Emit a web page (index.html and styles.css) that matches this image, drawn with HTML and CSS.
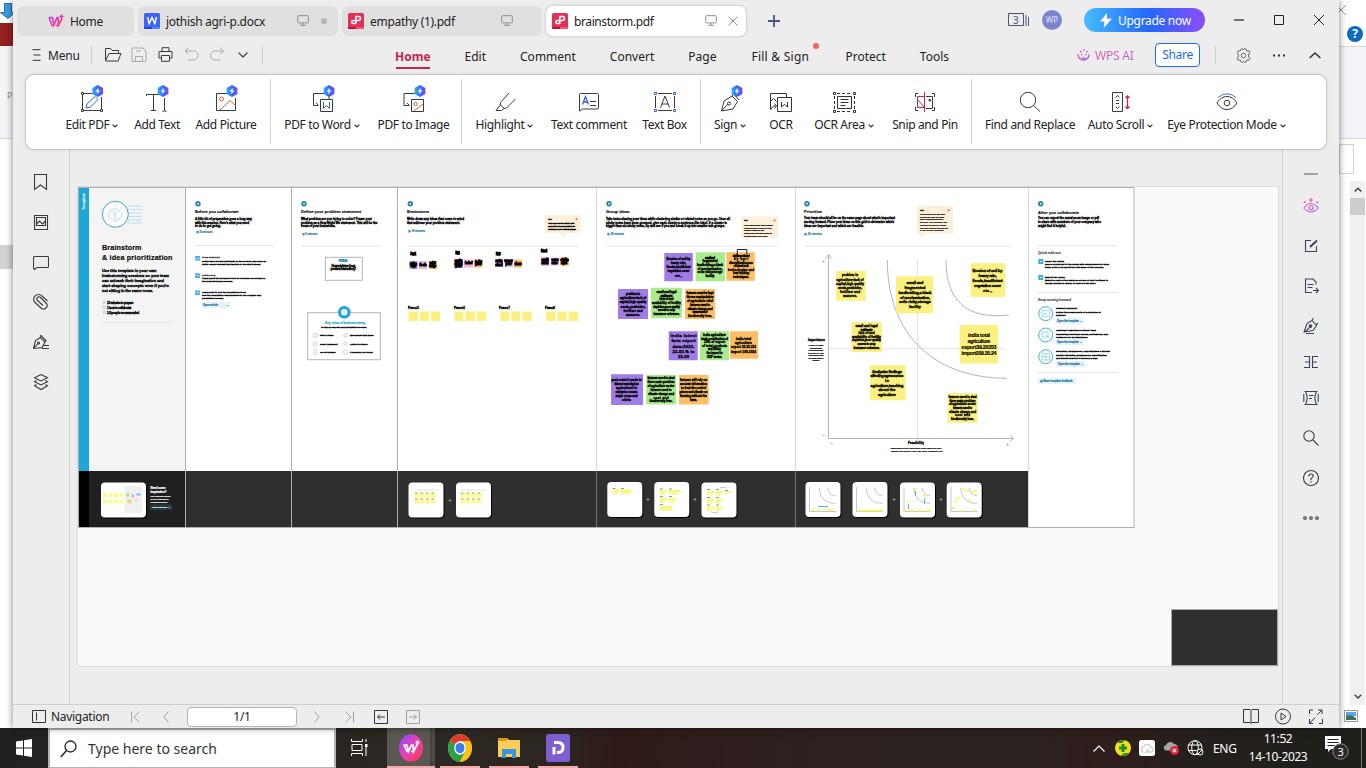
FILE: index.html
```html
<!DOCTYPE html>
<html lang="en">
<head>
<meta charset="utf-8">
<title>brainstorm.pdf - WPS Office</title>
<link rel="stylesheet" href="styles.css">
</head>
<body>
<svg class="defs" width="0" height="0">
  <defs>
    <linearGradient id="gBolt" x1="0" x2="1" y1="0" y2="0"><stop offset="0" stop-color="#35b0fb"/><stop offset=".5" stop-color="#2a6bfb"/><stop offset="1" stop-color="#7a4cf5"/></linearGradient>
    <linearGradient id="gWps" x1="0" x2="1" y1="0" y2="1"><stop offset="0" stop-color="#8a4dff"/><stop offset=".5" stop-color="#e83fb8"/><stop offset="1" stop-color="#ff3b3b"/></linearGradient>
    <linearGradient id="gAi" x1="0" x2="1" y1="0" y2="1"><stop offset="0" stop-color="#f0506a"/><stop offset=".5" stop-color="#d05ad0"/><stop offset="1" stop-color="#7a66f5"/></linearGradient>
    <symbol id="bolt" viewBox="0 0 12 12"><g stroke="none"><path d="M6 0l5.400 3v6L6 12 .6 9V3z" fill="url(#gBolt)"/><path d="M6.800 2.400L3.600 6.600h2L5.200 9.600l3.200-4.200h-2z" fill="#fff"/></g></symbol>
    <symbol id="mon" viewBox="0 0 12 11"><path d="M1.500.7h9a.8.8 0 0 1 .8.8v5.600a.8.8 0 0 1-.8.8h-9a.8.8 0 0 1-.8-.8V1.500a.8.8 0 0 1 .8-.8zM6 8v2M3 10.300h6" fill="none" stroke="#8e8e8e"/></symbol>
    <symbol id="pdf" viewBox="0 0 16 16"><rect width="16" height="16" rx="1.500" fill="#e0315b"/><path d="M0 14h8v2H1.500A1.500 1.500 0 0 1 0 14z" fill="#c4103c"/><path d="M8 14h8a1.500 1.500 0 0 1-1.500 2H8z" fill="#ff5271"/><path d="M7.800 11V3.500h2.700a1.800 1.800 0 0 1 0 3.900H5.300a1.600 1.600 0 0 0 0 3.200h2.500" fill="none" stroke="#fff" stroke-width="1.500"/></symbol>
    <symbol id="chev" viewBox="0 0 6 4"><path d="M.6.6L3 2.900 5.400.6" fill="none" stroke="#333" stroke-width="1.300"/></symbol>
    <symbol id="wps" viewBox="0 0 16 14"><path d="M1 3.500h3.500L6 11l3-7.500h1L10.500 11 14 4.500M1 3.500L4 11.500h2M8 11.500h3M13.500.5v4M11.500 2.500h4" fill="none" stroke="url(#gWps)" stroke-width="1.700"/></symbol>
  </defs>
</svg>
<div class="desktop">
  <aside class="behind-left">
    <svg width="13" height="20" viewBox="0 0 13 20"><path d="M4.500 3.500h7v9H15L8 18.500.5 12.500h4z" fill="#3d9be0" stroke="#2370ae"/></svg>
    <div class="bl-red"></div><div class="bl-tool">P</div><div class="bl-gap"></div><div class="bl-thumb"></div>
  </aside>

  <main class="app">
    <header class="tabs">
      <div class="tab home"><svg width="16" height="14"><use href="#wps"/></svg><span>Home</span></div>
      <div class="tab"><svg width="16" height="16" viewBox="0 0 16 16"><rect width="16" height="16" rx="1.500" fill="#3d63f5"/><path d="M0 14h8v2H1.500A1.500 1.500 0 0 1 0 14z" fill="#2547d8"/><path d="M8 14h8a1.500 1.500 0 0 1-1.500 2H8z" fill="#3f8cff"/><path d="M3.500 4l1.700 6.500L8 4.500l2.800 6L12.500 4" fill="none" stroke="#fff" stroke-width="1.500"/></svg><span class="nm">jothish agri-p.docx</span><svg class="mon" width="12" height="11"><use href="#mon"/></svg><i class="dot"></i></div>
      <div class="tab"><svg width="16" height="16"><use href="#pdf"/></svg><span class="nm">empathy (1).pdf</span><svg class="mon" width="12" height="11"><use href="#mon"/></svg></div>
      <div class="tab on"><svg width="16" height="16"><use href="#pdf"/></svg><span class="nm tight">brainstorm.pdf</span><svg class="mon" width="12" height="11"><use href="#mon"/></svg><svg class="x" width="10" height="10" viewBox="0 0 10 10"><path d="M.7.7l8.600 8.600M9.300.7L.7 9.300" stroke="#8a8a8a" fill="none"/></svg></div>
      <svg class="plus" width="12" height="12" viewBox="0 0 12 12"><path d="M6 0v12M0 6h12" stroke="#46597c" stroke-width="1.800"/></svg>
      <div class="winctl">
        <svg width="22" height="16" viewBox="0 0 22 16"><path d="M.5 1.500h15v12H.5zM18 3v11M20.500 5v9" fill="none" stroke="#46597c"/><text x="5" y="11.500" class="cnt">3</text></svg>
        <span class="avatar">WP</span>
        <span class="upgrade"><svg width="12" height="15" viewBox="0 0 12 15"><path d="M7 0L0 8.500h4.500L3.500 15 12 5.800H7z" fill="#fff"/></svg><b>Upgrade now</b></span>
        <svg class="wc min" width="10" height="12" viewBox="0 0 10 12"><path d="M0 6h10" stroke="#222" stroke-width="1.200"/></svg>
        <svg class="wc" width="10" height="10" viewBox="0 0 10 10"><path d="M.5.5h9v9h-9z" fill="none" stroke="#222"/></svg>
        <svg class="wc" width="10" height="10" viewBox="0 0 10 10"><path d="M0 0l10 10M10 0L0 10" stroke="#222"/></svg>
      </div>
    </header>

    <nav class="menu">
      <svg class="burger" width="9" height="12" viewBox="0 0 9 12"><path d="M.5.7h8M1.500 6h7M.5 11.300h8" stroke="#333" fill="none"/></svg><span class="mtext">Menu</span>
      <i class="vr"></i>
      <svg class="q1" width="130" height="16" viewBox="0 0 130 16" fill="none" stroke="#3a3a3a">
        <path d="M.5 13.500v-12h5l1.500 2h6.500v3M.5 13.500L4 6.500h12L13 14H.5"/>
        <path d="M27 1h11l3 3v10.500H27zM30.500 14.500V9.500h7v5M31 4h5" stroke="#a9a9a9"/>
        <path d="M57 4.500V.7h7v3.800M56.500 11H54V4.500h13V11h-2.500M56.500 8.500h8v5.800h-8z"/>
        <path d="M83.500.8L80 4l3.500 3.200M80 4h8.500a4.500 4.500 0 0 1 0 9H83" stroke="#a9a9a9"/>
        <path d="M115 .8l3.500 3.200-3.500 3.200M118.500 4H110a4.500 4.500 0 0 0 0 9h5.500" stroke="#a9a9a9"/>
      </svg>
      <svg class="q2" width="10" height="6" viewBox="0 0 10 6"><path d="M.5.6L5 5 9.500.6" fill="none" stroke="#333" stroke-width="1.200"/></svg>
      <i class="vr v2"></i>
      <div class="mtabs"><span class="cur">Home</span><span>Edit</span><span>Comment</span><span>Convert</span><span>Page</span><span class="fs">Fill &amp; Sign</span><span>Protect</span><span>Tools</span></div>
      <svg class="ai" width="13" height="13" viewBox="0 0 13 13"><path d="M1 5.500a5.500 5.500 0 1 0 11 0M4.500 8.500q2 1.500 4 0" fill="none" stroke="url(#gAi)" stroke-width="1.400"/><path d="M3 2h1.500v1.500H3zM6 .3h1.400v1.500H6zM9 2h1.500v1.500H9zM4 5h1.300v1.300H4zM8 5h1.300v1.300H8z" fill="url(#gAi)"/></svg>
      <span class="wpsai">WPS AI</span><span class="share">Share</span><i class="vr v3"></i>
      <svg class="gear" width="15" height="15" viewBox="0 0 15 15" fill="none" stroke="#666"><path d="M5 1.200L6.500.6 7.500 2 8.600.6l1.600.6.6 1.800 2.200-.2 1 1.700-1.300 1.500V9l1.300 1.500-1 1.700-2.200-.2-.6 1.800-1.600.6-1.100-1.300-1 1.300L5 13.800 4.300 12l-2.200.2-1-1.700L2.300 9V6L1.100 4.500l1-1.700 2.200.2z"/><circle cx="7.500" cy="7.500" r="2.300"/></svg>
      <svg class="dots" width="12" height="3" viewBox="0 0 12 3"><path d="M0 .6h2v2H0zM5 .6h2v2H5zM10 .6h2v2h-2z" fill="#333"/></svg>
      <svg class="up" width="12" height="7" viewBox="0 0 12 7"><path d="M.6 6L6 1l5.400 5" fill="none" stroke="#333" stroke-width="1.500"/></svg>
    </nav>

    <section class="ribbon">
      <div class="it i1"><svg viewBox="0 0 32 28" fill="none" stroke="#3a3a3a"><path d="M8 8.500h11M6.500 10v14M8 25.500h16M25.500 12v12"/><path d="M5.500 7.500h2v2h-2zM5.500 24.500h2v2h-2zM24.500 24.500h2v2h-2z" fill="#fff"/><path d="M10 23l1-4 8-7.500 3 3L14 22.500z" stroke="#2c5fe0"/><use href="#bolt" x="15.700" y="0" width="12" height="12"/></svg><span>Edit PDF<svg class="cv"><use href="#chev"/></svg></span></div>
      <div class="it i2"><svg viewBox="0 0 32 28" fill="none" stroke="#3a3a3a"><path d="M5.500 11V9.500H19M12.500 9.500v16M10 25.500h5M23.500 13v13M21.500 26.500q2 0 2-1.500 0 1.500 2 1.500"/><use href="#bolt" x="16" y="0" width="12" height="12"/></svg><span>Add Text</span></div>
      <div class="it i3"><svg viewBox="0 0 32 28" fill="none" stroke="#3a3a3a"><path d="M18 8.500H6.500v17H25.500V13"/><circle cx="11.500" cy="14" r="2" stroke="#d9602b"/><path d="M10 25l10-9.500 6 5.500" stroke="#d9602b"/><use href="#bolt" x="16" y="0" width="12" height="12"/></svg><span>Add Picture</span></div>
      <i class="sep"></i>
      <div class="it i4"><svg viewBox="0 0 32 28" fill="none" stroke="#3a3a3a"><path d="M18 8.500H7.500v12H12M10 17.500l2.500 3M14.500 14.500h12v12h-12zM23 11v3"/><path d="M17.500 17v6.500l3-3 3 3V17" stroke="#2c5fe0"/><use href="#bolt" x="17" y="0" width="12" height="12"/></svg><span>PDF to Word<svg class="cv"><use href="#chev"/></svg></span></div>
      <div class="it i5"><svg viewBox="0 0 32 28" fill="none" stroke="#3a3a3a"><path d="M18 8.500H6v12h5M9 18l2.500 2.500M13.500 14.500h12v12h-12z"/><circle cx="17.500" cy="19" r="1.700" stroke="#d9602b"/><path d="M16 26l9-7" stroke="#d9602b"/><use href="#bolt" x="16" y="0" width="12" height="12"/></svg><span>PDF to Image</span></div>
      <i class="sep s2b"></i>
      <div class="it i6"><svg viewBox="0 0 32 28" fill="none" stroke="#3a3a3a"><path d="M20 8l-8.500 9.500-.5 3-4 5h5.500l2.500-2 2.500-.5L26.500 14M11 19.500l4.500 4"/></svg><span>Highlight<svg class="cv"><use href="#chev"/></svg></span></div>
      <div class="it i7"><svg viewBox="0 0 32 28" fill="none" stroke="#3a3a3a"><path d="M6.500 26V9.500a1 1 0 0 1 1-1h17a1 1 0 0 1 1 1V23a1 1 0 0 1-1 1h-15z"/><path d="M9.500 19.500l3-8 3 8M10.500 17h4" stroke="#2c5fe0" stroke-width="1.300"/><path d="M17 16.500h6M17 20.500h6"/></svg><span>Text comment</span></div>
      <div class="it i8"><svg viewBox="0 0 32 28" fill="none" stroke="#3a3a3a"><path d="M9 8.500h14M9 25.500h14M6.500 11v12M25.500 11v12M11.500 22.500L16 11l4.500 11.500M13 19h6"/><path d="M5.500 7.500h2v2h-2zM24.500 7.500h2v2h-2zM5.500 24.500h2v2h-2zM24.500 24.500h2v2h-2z" stroke="#2c5fe0"/></svg><span>Text Box</span></div>
      <i class="sep s3b"></i>
      <div class="it i9"><svg viewBox="0 0 32 28" fill="none" stroke="#3a3a3a"><path d="M7.500 26l2.500-10 8-5 5.500 5.500-4.500 7.500zM7.500 26l6.500-7M20.500 10l4.500 5M18 11l2-2.500"/><circle cx="15" cy="18.500" r="1.500"/><use href="#bolt" x="17" y="0" width="12" height="12"/></svg><span>Sign<svg class="cv"><use href="#chev"/></svg></span></div>
      <div class="it i10"><svg viewBox="0 0 32 28" fill="none" stroke="#30343e"><path d="M21.500 12.500v-4H5.500v16M5.500 16.500l3-3 3 3M6 24.500q1-4 5-3.500M9.500 18.500l2 2.500-2 2.500M12.500 12.500h14v14h-14zM16.500 17v5l3-2.500 3 2.500v-5"/></svg><span>OCR</span></div>
      <div class="it i11"><svg viewBox="0 0 32 28" fill="none" stroke="#30343e"><path d="M9 8.500h14M9 26.500h14M6.500 11v13M26.500 11v13" stroke-dasharray="3 2"/><path d="M5.500 7.500h2v2h-2zM25.500 7.500h2v2h-2zM5.500 25.500h2v2h-2zM25.500 25.500h2v2h-2zM9.500 11.500h14v12h-14zM12.500 14.500h8M12.500 17.500h8M12.500 20.500h5"/></svg><span>OCR Area<svg class="cv"><use href="#chev"/></svg></span></div>
      <div class="it i12"><svg viewBox="0 0 32 28" fill="none" stroke="#3a3a3a"><path d="M9 8.500H6.500V12M23 8.500h2.500V12M9 25.500H6.500V22M23 25.500h2.500V22M17 11.500h6.500v12H17M20 14.500h1.500v1.500H20z"/><path d="M15.500 7v20M15 11.500H8.500v11H15M9 15l6 7" stroke="#c8254e"/></svg><span>Snip and Pin</span></div>
      <i class="sep s4b"></i>
      <div class="it i13"><svg viewBox="0 0 32 28" fill="none" stroke="#3a3a3a"><circle cx="14" cy="15" r="7.700"/><path d="M19.500 20.500l6.500 6"/></svg><span>Find and Replace</span></div>
      <div class="it i14"><svg viewBox="0 0 32 28" fill="none" stroke="#3a3a3a"><path d="M7.500 7.500h10v19h-10zM10.500 12.500l2-2 2 2M10.500 21.500l2 2 2-2M11 15.500h3M11 18.500h3"/><path d="M22.500 11v12M20.500 13l2-2 2 2M20.500 21.500l2 2 2-2" stroke="#c8254e" stroke-width="1.300"/></svg><span>Auto Scroll<svg class="cv"><use href="#chev"/></svg></span></div>
      <div class="it i15"><svg viewBox="0 0 32 28" fill="none" stroke="#3a3a3a"><path d="M6 18q4-6.500 10-6.500T26 18q-4 6.500-10 6.500T6 18z"/><circle cx="16" cy="18" r="2.800"/><path d="M7 12.500q9-7.500 18 0" stroke="#3d6df0"/></svg><span>Eye Protection Mode<svg class="cv"><use href="#chev"/></svg></span></div>
    </section>

    <section class="work">
      <aside class="rail left">
        <svg viewBox="0 0 16 18"><path d="M1.500 1.500h12v15l-6-4.500-6 4.500z"/></svg>
        <svg viewBox="0 0 16 18"><path d="M1.500 2.500h13v14h-13zM3.500 4.500h9v8h-9zM3.500 11l3-3 3 3 3-3"/></svg>
        <svg viewBox="0 0 16 18"><path d="M1.500 3.500h13a1 1 0 0 1 1 1v9a1 1 0 0 1-1 1H4l-2.500 2-1-1v-11a1 1 0 0 1 1-1z"/></svg>
        <svg viewBox="0 0 16 18"><path d="M14.500 8L9 3a4.800 4.800 0 0 0-7 0 4.500 4.500 0 0 0 0 6.500l6 5.500a3.500 3.500 0 0 0 5-5L7.500 4.500a2 2 0 0 0-3 3l5.500 5"/></svg>
        <svg viewBox="0 0 16 18"><path d="M.5 15.500l2-8 5-3 4.500 4.500-3 5.500-8.500 1 4.500-5M7 3.500l1-1 5 5-1 1M10 12.500h6M9 15.500h7"/><circle cx="5.500" cy="10" r="1"/></svg>
        <svg viewBox="0 0 16 18"><path d="M8 1.500l6.500 3.300L8 8 1.500 4.800zM3.500 7.500l-2 1.300L8 12l6.500-3.200-2-1.300M3.500 11.500l-2 1.300L8 16.500l6.500-3.700-2-1.300"/></svg>
      </aside>

      <div class="canvas">
        <div class="page">
          <div class="board">
            <svg width="107" height="341" viewBox="78 187 107 341" class="panel">
              <rect x="78" y="187" width="107" height="284" fill="#f4f4f4"/><rect x="78" y="471" width="107" height="57" fill="#202020"/>
              <rect x="78" y="187" width="11" height="284" fill="#1ba7d8"/><rect x="78" y="471" width="11" height="57" fill="#000"/>
              <text class="w tpl" transform="translate(85 210) rotate(-90)" textLength="17">Template</text>
              <path class="wave" d="M128 206h14M128 209.500h14M128 213h14M128 216.500h14M128 220h14M128 223h14"/>
              <circle cx="115.300" cy="214.300" r="13" fill="#fff" stroke="#35a8d4" stroke-width="1"/>
              <path class="ic" d="M112 219c-5-1-4-7-1-8 1-3 7-3 8 0 4 1 4 7-1 8l-2.500 3zM113 211l2 5 2-5M115 216v4M115.500 207v-2M111 209l-1.500-1.500M120 209l1.500-1.500"/>
              <text class="ttl" x="102" y="249.800" textLength="39.500">Brainstorm</text><text class="ttl" x="102" y="260" textLength="70.500">&amp; idea prioritization</text>
              <g class="b4"><text x="102" y="271.800" textLength="54.500">Use this template in your own</text><text x="102" y="276.900" textLength="67">brainstorming sessions so your team</text><text x="102" y="281.900" textLength="62">can unleash their imagination and</text><text x="102" y="287" textLength="67">start shaping concepts even if you're</text><text x="102" y="292" textLength="51">not sitting in the same room.</text></g>
              <g class="b3"><text x="107" y="304" textLength="26.500">10 minutes to prepare</text><text x="107" y="309" textLength="24.500">1 hour to collaborate</text><text x="107" y="314" textLength="32">2-8 people recommended</text></g>
              <path class="ic2" d="M103 301.500h2v2h-2zM103 306.500h2v2h-2zM103 311.500h2v2h-2z"/><path class="hr" d="M103 322.500h68"/>
              <rect class="card" x="101" y="482.500" width="45" height="35" rx="4"/><rect x="124.500" y="486" width="17.500" height="27" fill="#f0f0f0"/>
              <path class="yl" d="M103 493h4v4h-4zM108.500 493h4v4h-4zM114 493h4v4h-4zM119.500 493h4v4h-4zM103 499.500h4v4h-4zM108.500 499.500h4v4h-4zM114 499.500h4v4h-4zM119.500 499.500h4v4h-4z"/>
              <path d="M126 493.500h3v3h-3z" fill="#a4e38b"/><path d="M131.500 494.500h2.500v3h-2.500z" fill="#e3a4e0"/><path d="M136.500 493.500h4v2h-4z" fill="#6dc9e8"/><path d="M127.500 499.500h4v4h-4z" fill="#eed07e"/><path d="M135 499.500h3v2h-3z" fill="#ddd"/>
              <g class="w3"><text x="150.500" y="489" textLength="15">Need some</text><text x="150.500" y="493" textLength="16">inspiration?</text></g>
              <g class="w2"><text x="150.500" y="497" textLength="20">See a finished version</text><text x="150.500" y="500" textLength="18">of this template to</text><text x="150.500" y="503" textLength="17">kickstart your work.</text></g>
              <rect x="150" y="504.500" width="22" height="5.500" rx="1" fill="#263a44"/><text class="w2" x="152" y="508.300" textLength="18">Open example →</text>
              <path class="ln" d="M78.500 187v341M78 187.500h107M78 527.500h107"/>
            </svg>
            <svg class="panel" width="106" height="341" viewBox="185 187 106 341">
              <rect class="foot" x="185" y="471" width="106" height="57"/>
              <circle class="num" cx="198" cy="203.700" r="2.700"/><circle cx="198" cy="203.700" r=".9" fill="#fff"/>
              <text class="h" x="195" y="213" textLength="43.500">Before you collaborate</text>
              <g class="b3"><text x="195" y="220.300" textLength="57">A little bit of preparation goes a long way</text><text x="195" y="223.800" textLength="54">with this session. Here's what you need</text><text x="195" y="227.300" textLength="26">to do to get going.</text></g>
              <text class="tm" x="195.500" y="233" textLength="17">◷ 10 minutes</text><path class="hr" d="M195 245.500h79"/>
              <path class="bx" d="M195.200 256h4.600v4.600h-4.600zM195.200 273.300h4.600v4.600h-4.600zM195.200 290.400h4.600v4.600h-4.600z"/><path class="bw" d="M196.500 258.500h2M196.500 275.500h2M196.500 292.800h2"/>
              <g class="b25"><text class="lt" x="202" y="258.300" textLength="18">Team gathering</text><text x="202" y="262" textLength="64">Define who should participate in the session and send an</text><text x="202" y="265" textLength="59">invite. Share relevant information or pre-work ahead.</text>
              <text class="lt" x="202" y="275.600" textLength="13.500">Set the goal</text><text x="202" y="279.300" textLength="63">Think about the problem you'll be focusing on solving in</text><text x="202" y="282.300" textLength="31">the brainstorming session.</text>
              <text x="202" y="293" textLength="44">Learn how to use the facilitation tools</text><text x="202" y="296.200" textLength="59">Use the Facilitation Superpowers to run a happy and</text><text x="202" y="299.200" textLength="22">productive session.</text></g>
              <rect x="202" y="302" width="28" height="6" fill="#e3f3fb"/><text class="bt" x="203" y="306.200" textLength="15">Open article</text><text class="bt" x="226" y="306.200">→</text>
              <path class="ln" d="M185.500 187v341"/><path class="ln" d="M185 187.500h106M185 527.500h106"/>
            </svg>
            <svg class="panel" width="106" height="341" viewBox="291 187 106 341">
              <rect class="foot" x="291" y="471" width="106" height="57"/>
              <circle class="num" cx="304" cy="203.700" r="2.700"/><circle cx="304" cy="203.700" r=".9" fill="#fff"/>
              <text class="h" x="301" y="213" textLength="60">Define your problem statement</text>
              <g class="b3"><text x="301" y="220.300" textLength="71">What problem are you trying to solve? Frame your</text><text x="301" y="223.500" textLength="76.500">problem as a How Might We statement. This will be the</text><text x="301" y="227.300" textLength="34.500">focus of your brainstorm.</text></g>
              <text class="tm" x="301.500" y="235" textLength="16">◷ 5 minutes</text><path class="hr" d="M301 246.300h79"/>
              <rect class="gb" x="325.300" y="257.300" width="37" height="23"/><text class="tm" x="338.500" y="262" textLength="9">PROBLEM</text><g class="b3"><text x="331.500" y="267.300" textLength="24">How might we [your</text><text x="330.500" y="270.300" textLength="25.500">problem statement]?</text></g>
              <rect class="gb" x="307.700" y="312.700" width="72.600" height="47"/><circle cx="344.300" cy="312.300" r="6.300" fill="#1ba7d8"/><circle cx="344.300" cy="312.300" r="3.200" fill="#fff"/><path class="ic" d="M342.500 310.500l3.500 3.500M346 310.500l-3.500 3.500"/>
              <text class="tm big" x="325" y="324.200" textLength="40">Key rules of brainstorming</text>
              <g class="b25"><text x="321" y="328" textLength="45.500">To run an smooth and productive session</text><text x="320" y="336" textLength="14">Stay in topic.</text><text x="350" y="336" textLength="24">Encourage wild ideas.</text><text x="320" y="345" textLength="18">Defer judgment.</text><text x="350" y="345" textLength="18">Listen to others.</text><text x="320" y="353" textLength="16">Go for volume.</text><text x="350" y="353" textLength="23">If possible, be visual.</text></g>
              <g class="ic"><circle cx="315.300" cy="335.300" r="2"/><circle cx="345.500" cy="335.300" r="1.700"/><circle cx="315.300" cy="344" r="2"/><circle cx="345.500" cy="343.500" r="1.700"/><rect x="314" y="349.500" width="2.500" height="5" rx="1"/><ellipse cx="345.500" cy="352" rx="2.300" ry="1.700"/></g>
              <path class="ln" d="M291.500 187v341M291 187.500h106M291 527.500h106"/>
            </svg>
            <svg class="panel" width="199" height="341" viewBox="397 187 199 341">
              <rect class="foot" x="397" y="471" width="199" height="57"/>
              <circle class="num" cx="410.300" cy="203.700" r="2.700"/><circle cx="410.300" cy="203.700" r=".9" fill="#fff"/>
              <text class="h" x="407" y="213" textLength="22">Brainstorm</text>
              <g class="b3"><text x="407" y="220.300" textLength="57">Write down any ideas that come to mind</text><text x="407" y="223.600" textLength="53">that address your problem statement.</text></g>
              <text class="tm" x="408" y="232.300" textLength="17">◷ 10 minutes</text><path class="hr" d="M408 246h171"/>
              <path class="tip" d="M544.700 215h36v18h-14l-4 5-2-5h-16z"/><text class="b25" x="548" y="220">TIP</text><circle cx="576.500" cy="219" r="1.100" fill="#f26a4c"/><g class="b25"><text x="548" y="223.800" textLength="26.500">You can select a sticky note</text><text x="548" y="226.800" textLength="27">and hit the pencil [switch to</text><text x="548" y="229.800" textLength="28">sketch] icon to start drawing!</text></g>
              <path d="M409.500 261h8v8h-8zM454 259h9v9h-9zM495 259h8v8h-8zM541 257.500h8v8h-8z" fill="#a98bea"/><path d="M419 261h8v8h-8zM464 259.500h9v8h-9zM505 259h8v8h-8zM551 257.500h8v8h-8z" fill="#f4b3d8"/><path d="M429 261h8v8h-8zM474.500 259.500h8v8h-8zM514 259.500h8v8h-8zM560 257.500h9v8h-9z" fill="#ffb961"/>
              <g class="blk"><text x="410.500" y="254.800" textLength="5.500">Person 1</text><text x="455.500" y="253.800" textLength="4">Person 2</text><text x="496" y="254.800" textLength="4.500">Person 3</text><text x="541" y="252" textLength="6">Person 4</text>
              <text x="410" y="264.500" textLength="7">problem</text><text x="411" y="267" textLength="5">crops</text><text x="419.500" y="266" textLength="7">floods</text><text x="429.500" y="264" textLength="6">market</text><text x="429" y="267" textLength="7">storage</text><text x="455" y="262" textLength="7">quality</text><text x="454.500" y="264.500" textLength="8">seeds and</text><text x="455.500" y="267" textLength="6">pests</text><text x="465" y="264" textLength="7.500">lack of</text><text x="475" y="262.500" textLength="7">facility</text><text x="475" y="265" textLength="6.500">prices</text><text x="495.500" y="262" textLength="7">erosion</text><text x="495.500" y="265.500" textLength="7">of soil</text><text x="504.500" y="262" textLength="8">transport</text><text x="505.500" y="265" textLength="6">poor</text><text x="514.500" y="264.500" textLength="7">climate</text><text x="541.500" y="260.500" textLength="7">credit</text><text x="541.500" y="263.500" textLength="7">debts</text><text x="551.500" y="260.500" textLength="7">water</text><text x="551.500" y="263.500" textLength="6">scarce</text><text x="560.500" y="260.500" textLength="8">subsidies</text><text x="561" y="263.500" textLength="6">export</text></g>
              <g class="b3"><text x="408" y="309" textLength="11">Person 5</text><text x="454" y="309" textLength="11">Person 6</text><text x="499" y="309" textLength="11">Person 7</text><text x="545" y="309" textLength="10">Person 8</text></g>
              <path class="y2" d="M408.500 311.500h9.500v9.500h-9.500zM420 311.500h9v9.500h-9zM431 311.500h9v9.500h-9zM454.500 311.500h9v9.500h-9zM465.500 311.500h9.500v9.500h-9.500zM477 311.500h9v9.500h-9zM500.300 311.500h9v9.500h-9zM511.300 311.500h9v9.500h-9zM522.500 311.500h9v9.500h-9zM546 311.500h9.500v9.500H546zM557.500 311.500h9v9.500h-9zM568.500 311.500h9.500v9.500h-9.500z"/>
              <rect class="card" x="408.500" y="482.500" width="35" height="35" rx="4"/><rect class="card" x="456" y="482.500" width="35" height="35" rx="4"/><path class="hr" d="M414 490h25M461 490h25"/>
              <path class="yl" d="M414.500 493h4.500v4.500h-4.500zM420 493h4.500v4.500H420zM425.500 493h4.500v4.500h-4.500zM431 493h4.500v4.500H431zM414.500 499h4.500v4.500h-4.500zM420 499h4.500v4.500H420zM425.500 499h4.500v4.500h-4.500zM431 499h4.500v4.500H431zM460.500 493h4.500v4.500h-4.500zM466 493h4.500v4.500H466zM471.500 493h4.500v4.500h-4.500zM477 493h4.500v4.500H477zM460.500 499h4.500v4.500h-4.500zM466 499h4.500v4.500H466zM471.500 499h4.500v4.500h-4.500zM477 499h4.500v4.500H477z"/><path d="M415 493h21M415 499h21M461 493h21M461 499h21" stroke="#8a8a55" stroke-width=".8" stroke-dasharray="2.500 3"/>
              <path class="ar" d="M448.500 500.500h3M450 499v3"/>
              <path class="ln" d="M397.500 187v341M397 187.500h199M397 527.500h199"/>
            </svg>
            <svg class="panel" width="199" height="341" viewBox="596 187 199 341">
              <rect class="foot" x="596" y="471" width="199" height="57"/>
              <circle class="num" cx="609" cy="203.700" r="2.700"/><circle cx="609" cy="203.700" r=".9" fill="#fff"/>
              <text class="h" x="606" y="213" textLength="23.500">Group ideas</text>
              <g class="b3"><text x="606" y="220" textLength="124">Take turns sharing your ideas while clustering similar or related notes as you go. Once all</text><text x="606" y="223.500" textLength="121">sticky notes have been grouped, give each cluster a sentence-like label. If a cluster is</text><text x="606" y="227.200" textLength="119">bigger than six sticky notes, try and see if you and break it up into smaller sub-groups.</text></g>
              <text class="tm" x="607" y="235" textLength="17">◷ 20 minutes</text><path class="hr" d="M607 246h170"/>
              <path class="tip" d="M741.500 216.500h36.500V238h-29v5l-5-5h-2.500z"/><text class="b25" x="744" y="221">TIP</text><circle cx="774.500" cy="220.500" r="1.100" fill="#f26a4c"/><g class="b2"><text x="744" y="226" textLength="29">Add customizable tags to sticky</text><text x="744" y="229" textLength="28">notes to make it easier to find,</text><text x="744" y="231" textLength="20">browse, organize, and</text><text x="744" y="233.500" textLength="28">categorize important ideas as</text><text x="744" y="236.500" textLength="24">themes within your mural.</text></g>
              <path fill="#a07ce6" d="M664.300 253h28.500v28.300h-28.500zM618 289h30v30h-30zM668.700 331.300h29v29h-29zM611 374.300h32V405h-32z"/>
              <path fill="#a9ec8e" d="M695.700 252.300H725v29h-29.300zM651 287.700h31v30.500h-31zM700 331.300h29v29h-29zM646.300 375H676v29.500h-29.700z"/>
              <path fill="#ffbe64" d="M726.300 252.300h28.500v28.500h-28.500zM685 289h30v30h-30zM730 331.300h28v27.500h-28zM679 375h29.700v29.500H679z"/>
              <g class="b3 m"><text x="678.500" y="260" textLength="24">Erosion of soil by</text><text x="678.500" y="264.200" textLength="15">heavy rain,</text><text x="678.500" y="268.300" textLength="24">floods,insufficient</text><text x="678.500" y="272.200" textLength="22">vegetation cover</text><text x="678.500" y="276.500" textLength="7">etc.,</text>
              <text x="710" y="259" textLength="10">small and</text><text x="710" y="262.300" textLength="15">fragmented</text><text x="710" y="265.800" textLength="26">landholding,a black</text><text x="710" y="269.500" textLength="25">of mechanisation,</text><text x="710" y="273" textLength="25">soils risky,storage</text><text x="710" y="277" textLength="9">facility</text>
              <text x="741" y="257" textLength="17">challenges faced</text><text x="741" y="260" textLength="14">by agri</text><text x="741" y="263.500" textLength="24">diversification,use</text><text x="741" y="267" textLength="15">of latest tech</text><text x="741" y="270.500" textLength="26">technologies and</text><text x="741" y="274" textLength="16">low funding</text><text x="741" y="278" textLength="16">techniques.</text>
              <text x="633" y="295" textLength="14">problem in</text><text x="633" y="299" textLength="26">agriculture:lack of</text><text x="633" y="303.200" textLength="27">capital,high quality</text><text x="633" y="307.500" textLength="25">seeds,pesticides,</text><text x="633" y="311.500" textLength="19">fertilizer and</text><text x="633" y="316" textLength="14">manures.</text>
              <text x="666.500" y="293" textLength="20">small and legal</text><text x="666.500" y="296.500" textLength="12">problems in</text><text x="666.500" y="300" textLength="14">lack of and</text><text x="666.500" y="304" textLength="29">availability of fertility</text><text x="666.500" y="307.500" textLength="27">depletion,poor quality</text><text x="666.500" y="311" textLength="17">access to crop</text><text x="666.500" y="315" textLength="26">insurance schemes.</text>
              <text x="700" y="294" textLength="27">farmers must be kept</text><text x="700" y="298" textLength="27">throne manipulation</text><text x="700" y="301.500" textLength="26">of agriculture relief</text><text x="700" y="305.500" textLength="20">farmers want to</text><text x="700" y="309.500" textLength="25">climate change and</text><text x="700" y="313" textLength="15">awareness of</text><text x="700" y="317" textLength="24">biodiversity loss.</text></g>
              <g class="b4 m"><text x="683.500" y="336.500" textLength="26">india latest</text><text x="683.500" y="342.300" textLength="24">farm export</text><text x="683.500" y="347.500" textLength="22">data:2022-</text><text x="683.500" y="353" textLength="22">23-$0.% to</text><text x="683.500" y="358.300" textLength="11">35.69</text></g>
              <g class="b3 m"><text x="714.500" y="336" textLength="23">india agriculture</text><text x="714.500" y="339.500" textLength="27">trade,contribution of</text><text x="714.500" y="343" textLength="21">10% of export</text><text x="714.500" y="346.500" textLength="25">of total products</text><text x="714.500" y="350" textLength="13">and 11% by</text><text x="714.500" y="353.500" textLength="16">the import in</text><text x="714.500" y="358" textLength="15">GDP sector.</text>
              <text x="743.500" y="340" textLength="15">india total</text><text x="743.500" y="344" textLength="17">agriculture</text><text x="743.500" y="348" textLength="25">export 39.20.353</text><text x="743.500" y="353" textLength="25">import 109.2024</text>
              <text x="626.500" y="381" textLength="30">pest control needs in</text><text x="626.500" y="385" textLength="24">labour scarcity,low</text><text x="626.500" y="389" textLength="21">agricultural in</text><text x="626.500" y="393" textLength="22">analysis census</text><text x="626.500" y="397" textLength="22">major crops and</text><text x="626.500" y="401" textLength="9">cities</text>
              <text x="661" y="379" textLength="27">farmers need to deal</text><text x="661" y="382.700" textLength="27">three main problem</text><text x="661" y="387" textLength="27">of agriculture sector</text><text x="661" y="391" textLength="21">farmers need to</text><text x="661" y="394.500" textLength="26">climate change and</text><text x="661" y="398.500" textLength="15">cost and</text><text x="661" y="402" textLength="23">biodiversity loss.</text>
              <text x="693.500" y="381" textLength="27">farmers will rely on</text><text x="693.500" y="385" textLength="27">accurate information</text><text x="693.500" y="389" textLength="25">to treat the control</text><text x="693.500" y="393" textLength="28">prices and climate on</text><text x="693.500" y="397" textLength="27">farming without the</text><text x="693.500" y="401" textLength="7">farm.</text></g>
              <path d="M737.300 249.500h9.500v6.500h-9.500z" fill="none" stroke="#222" stroke-width="1"/>
              <rect class="card" x="607.300" y="482" width="35" height="35" rx="4"/><rect class="card" x="654.300" y="482" width="35" height="35" rx="4"/><rect class="card" x="701.500" y="482.500" width="35" height="35" rx="4"/>
              <path class="yd" d="M612.500 490.500h7M621 490.500h11M612.500 492.700h5M621 492.700h9M660 491h7M669 491h11.500M660 493.500h5M669 493.500h9M660 499h7M669 499h7M660 501.500h5M669 501.500h5M660 507h12M660 509.500h12M707 492h7M716 492h7M725 492h6M707 494.500h5M716 494.500h5M707 500h7M716 500h6M707 502.500h5M716 502.500h5M707 507.500h7M716 507.500h6M707 510h5M716 510h5"/>
              <path class="kd" d="M612.500 488.500h3M621 488.500h3M660 489h3M669 489h3M660 496.500h3M669 496.500h3M660 504.500h3M707 489.500h3M716 489.500h3M725 490.500h3M707 497.500h3M716 497.500h3M707 505h3M716 505h3"/><path d="M720 488q3-2 7 0M711 512q4 2 7 0" fill="none" stroke="#a99af0" stroke-width=".7"/>
              <path class="ar" d="M646.500 499.500h3M648 498v3M693.500 499.500h3M695 498v3"/>
              <path class="ln" d="M596 187v341M596 187.500h199M596 527.500h199"/>
            </svg>
            <svg class="panel" width="233" height="341" viewBox="795 187 233 341">
              <rect class="foot" x="795" y="471" width="233" height="57"/>
              <circle class="num" cx="807" cy="203.700" r="2.700"/><circle cx="807" cy="203.700" r=".9" fill="#fff"/>
              <text class="h" x="804" y="213" textLength="18">Prioritize</text>
              <g class="b3"><text x="804" y="219.200" textLength="91">Your team should all be on the same page about what's important</text><text x="804" y="223.200" textLength="90">moving forward. Place your ideas on this grid to determine which</text><text x="804" y="227.200" textLength="60">ideas are important and which are feasible.</text></g>
              <text class="tm" x="804" y="235" textLength="18">◷ 20 minutes</text><path class="hr" d="M805 246.300h205"/>
              <path class="tip" d="M917 206h36v27.500h-27l-6 5v-5h-3z"/><text class="b25" x="920" y="211">TIP</text><circle cx="948.500" cy="210.300" r="1.100" fill="#f26a4c"/><g class="b2"><text x="920" y="215" textLength="25">Participants can use their</text><text x="920" y="217.700" textLength="24">cursors to point at where</text><text x="920" y="220.400" textLength="23">sticky notes should go on</text><text x="920" y="223.100" textLength="27">the grid. The facilitator can</text><text x="920" y="225.800" textLength="26">confirm the spot by using</text><text x="920" y="228.500" textLength="28">the laser pointer holding the</text><text x="920" y="231.200" textLength="24">H key on the keyboard.</text></g>
              <path d="M828.500 348.700H1006M917.500 260v178" stroke="#e3e3e3" fill="none"/>
              <g fill="none" stroke="#b5b5b5"><path d="M828.500 438.500V255M825.500 258.500l3-4 3 4M828.500 438.500H1013M1010 435.500l3.500 3-3.500 3"/><path d="M887.300 260c0 70 42 118 119.500 118.300M946 260c0 40 20 60 63 55"/></g>
              <g class="pm"><text x="822" y="263">+</text><text x="822" y="437">–</text><text x="830" y="445">–</text><text x="1006" y="446">+</text></g>
              <path class="y2" d="M836 271h29.700v29.700H836zM896 276.300h37v37h-37zM970.700 263.300h34.300V297h-34.300zM851.500 322h30.300v30h-30.300zM959.700 325h38.300v38.500h-38.300zM870 365.300h35.500v35H870zM947.700 393.300h30v29.500h-30z"/>
              <g class="b3 m"><text x="850" y="276" textLength="16">problem in</text><text x="850" y="281" textLength="27">agriculture:lack of</text><text x="850" y="285" textLength="28">capital,high quality</text><text x="850" y="289" textLength="24">seeds,pesticides,</text><text x="850" y="293" textLength="20">fertilizer and</text><text x="850" y="297.200" textLength="14">manures.</text>
              <text x="866.500" y="327" textLength="22">small and legal</text><text x="866.500" y="331" textLength="12">problems in</text><text x="866.500" y="334.200" textLength="16">lack of and</text><text x="866.500" y="338" textLength="29">availability of fertility</text><text x="866.500" y="341.200" textLength="29">depletion,poor quality</text><text x="866.500" y="345" textLength="18">access to crop</text><text x="866.500" y="349" textLength="26">insurance schemes.</text>
              <text x="962.500" y="398" textLength="28">farmers need to deal</text><text x="962.500" y="401.500" textLength="26">three main problem</text><text x="962.500" y="405" textLength="27">of agriculture sector</text><text x="962.500" y="409" textLength="19">farmers need to</text><text x="962.500" y="412.500" textLength="27">climate change and</text><text x="962.500" y="416" textLength="15">cost and</text><text x="962.500" y="420" textLength="23">biodiversity loss.</text></g>
              <g class="b4 m"><text x="915" y="284" textLength="17">small and</text><text x="915" y="289" textLength="21">fragmented</text><text x="915" y="294" textLength="33">landholding,a black</text><text x="915" y="298.500" textLength="30">of mechanisation,</text><text x="915" y="303" textLength="32">soils risky,storage</text><text x="915" y="308" textLength="12">facility</text>
              <text x="987.500" y="272.300" textLength="30">Erosion of soil by</text><text x="987.500" y="277.300" textLength="18">heavy rain,</text><text x="987.500" y="282" textLength="30">floods,insufficient</text><text x="987.500" y="286.500" textLength="27">vegetation cover</text><text x="987.500" y="291.500" textLength="9">etc.,</text>
              <text x="887" y="373" textLength="30">Analysize findings</text><text x="887" y="377.300" textLength="33">affecting agresources</text><text x="887" y="382" textLength="4">in</text><text x="887" y="386.500" textLength="33">agriculture,teaching</text><text x="887" y="391" textLength="17">about the</text><text x="887" y="395.500" textLength="18">agriculture</text></g>
              <g class="b5 m"><text x="979" y="337" textLength="22">india total</text><text x="979" y="343.300" textLength="23">agriculture</text><text x="979" y="349.300" textLength="35">export39.20353</text><text x="979" y="355.300" textLength="35">import209.20.24</text></g>
              <text class="b3" x="808" y="341" textLength="17">Importance</text><g class="b2 m"><text x="816" y="346" textLength="15">If each of these</text><text x="816" y="348.500" textLength="12">tasks could get</text><text x="816" y="351" textLength="15">done without any</text><text x="816" y="353.500" textLength="16">difficulty or cost,</text><text x="816" y="356" textLength="15">which would have</text><text x="816" y="358.500" textLength="15">the most positive</text><text x="816" y="361" textLength="7">impact?</text></g>
              <text class="b3" x="908" y="444" textLength="16">Feasibility</text><g class="b2 m"><text x="916" y="449" textLength="51">Regardless of their importance, which tasks are more</text><text x="917" y="451.500" textLength="52">feasible than others? (Cost, time, effort, complexity, etc.)</text></g>
              <rect class="card" x="805.500" y="482" width="35" height="35" rx="4"/><rect class="card" x="852.500" y="482" width="35" height="35" rx="4"/><rect class="card" x="900" y="482.500" width="35" height="35" rx="4"/><rect class="card" x="946.700" y="482.500" width="35" height="35" rx="4"/>
              <g fill="none" stroke="#b9b9b9" stroke-width=".8"><path id="gr" d="M809.500 487v24.500H836M819 487.500q1 16 16.500 16M827.500 487.500q1 8 8 8"/><use href="#gr" x="47"/><use href="#gr" x="94.500"/><use href="#gr" x="141.500"/></g>
              <path class="yd" d="M812 509.500h3M818 509.500h3M827 509.500h7M858 510.500h25M904 510.500h3M910 510.500h4M918 510.500h5M926 510.500h5M906.500 501.500h3M914 489h3M923 495.500h3M952 508h3M959 510.500h3M973 510.500h3M954 501.500h3M956.500 498h3M962 489h3M965 491h3M971 492h3M974 491h3M968 500.500h3"/>
              <path d="M818 506.500h10M908.500 504v5M915.500 491v5M924.500 498v6" stroke="#4fb7dc"/><path class="ar" d="M892.500 499.500h3M894 498v3M939.500 499.500h3M941 498v3"/>
              <path class="ln" d="M795 187v341M795 187.500h233M795 527.500h233"/>
            </svg>
            <svg class="panel" width="107" height="341" viewBox="1028 187 107 341">
              <circle class="num" cx="1040.700" cy="203.700" r="2.700"/><circle cx="1040.700" cy="203.700" r=".9" fill="#fff"/>
              <text class="h" x="1038" y="214" textLength="41">After you collaborate</text>
              <g class="b3"><text x="1038" y="219.300" textLength="61">You can export the mural as an image or pdf</text><text x="1038" y="223.300" textLength="63">to share with members of your company who</text><text x="1038" y="227.200" textLength="28">might find it helpful.</text></g>
              <path class="hr" d="M1038 245.700h79M1038 292.500h80M1038 372.500h80"/>
              <text class="tm gy" x="1038" y="253.700" textLength="23">Quick add-ons</text><path class="bx" d="M1038.300 259h5v5h-5zM1038.300 275h5v5h-5z"/><path class="bw" d="M1040 261.500h2M1040 277.500h2"/>
              <g class="b25"><text x="1045" y="262" textLength="19">Share the mural</text><text x="1045" y="265.200" textLength="64">Share a view link to the mural with stakeholders to keep</text><text x="1045" y="268.200" textLength="59">them in the loop about the outcomes of the session.</text><text x="1045" y="278" textLength="20">Export the mural</text><text x="1045" y="281.200" textLength="63">Export a copy of the mural as a PNG or PDF to attach to</text><text x="1045" y="284.200" textLength="51">emails, include in slides, or save in your drive.</text></g>
              <text class="tm gy" x="1038" y="301" textLength="33">Keep moving forward</text>
              <g fill="#f4fbfe" stroke="#35a8d4" stroke-width=".9"><circle cx="1045.700" cy="313.700" r="7"/><circle cx="1045.700" cy="335" r="7"/><circle cx="1045.700" cy="356.700" r="7"/></g>
              <path class="ic" d="M1042 310.500h7.500v6H1042zM1043 315l2-2 2 2M1042 332h6v5h-6zM1046 335l3 3M1042 353.500h7.500v6.500H1042zM1045.700 353.500v6.500M1042 356.700h7.500"/>
              <g class="b25"><text x="1056" y="309" textLength="21">Strategy blueprint</text><text x="1056" y="313" textLength="45">Define the components of a new idea or</text><text x="1056" y="316.200" textLength="10">strategy.</text><text x="1056" y="331" textLength="40">Customer experience journey map</text><text x="1056" y="334.800" textLength="52">Understand customer needs, motivations, and</text><text x="1056" y="338" textLength="32">obstacles for an experience.</text><text x="1056" y="352" textLength="54">Strengths, weaknesses, opportunities &amp; threats</text><text x="1056" y="355.800" textLength="51">Identify strengths, weaknesses, opportunities,</text><text x="1056" y="359" textLength="42">and threats (SWOT) to develop a plan.</text></g>
              <path d="M1056 318h28v6h-28zM1056 339.500h28v5.500h-28zM1056 361h29v6h-29zM1038 378h38v6h-38z" fill="#e3f3fb"/>
              <g class="bt"><text x="1057" y="322" textLength="25">Open the template →</text><text x="1057" y="343.200" textLength="25">Open the template →</text><text x="1058" y="365.200" textLength="25">Open the template →</text><text x="1039.500" y="382.200" textLength="33">◎ Share template feedback</text></g>
              <path class="ln" d="M1028 187v341M1134 187v341M1028 187.500h106M1028 527.500h106"/>
            </svg>
          </div>
          <div class="darkbox"></div>
        </div>
      </div>

      <aside class="rail right">
        <svg viewBox="0 0 16 18"><path d="M1 9h14" stroke="#8f8f8f" stroke-width="1.600"/></svg>
        <svg viewBox="0 0 16 18" class="aig"><path d="M.7 11q7.300-9 14.600 0-7.300 8-14.600 0zM8 1v4M6 3h4"/><circle cx="8" cy="10.800" r="2"/><path d="M1.800 4.500v1.500M14.200 4.500v1.500" stroke-width="2"/></svg>
        <svg viewBox="0 0 16 18" class="nv"><path d="M8 3.500H2.500v11h11V9"/><path d="M7 10l7-6.500" stroke-width="2"/></svg>
        <svg viewBox="0 0 16 18" class="nv"><path d="M13 7.500V5l-3-3H2.500v13.500H9M4.500 7.500h6M4.500 10.500h5M10 13.500h5.500M13 11l2.500 2.500L13 16"/></svg>
        <svg viewBox="0 0 16 18" class="nv"><path d="M1 15l3-8.500 5-3 4.500 5-3.500 5L2 15l5-5M9 3l1.500-2M13 8l2-2M3 16.500h8"/><circle cx="7.500" cy="9" r="1.300" fill="#39445c"/></svg>
        <svg viewBox="0 0 16 18" class="nv near"><path d="M1 3.500h5.500v11H1M2 9h4M15 3.500H9.500v11H15M14 9h-4"/></svg>
        <svg viewBox="0 0 16 18" class="nv near"><path d="M1.500 2.500h13M1.500 15.500h13M2.500 2.500c2 4 2 9 0 13M13.500 2.500c-2 4-2 9 0 13M.8 5v8M15.200 5v8M6 6.500h4.500M6 9.500h3"/></svg>
        <svg viewBox="0 0 16 18"><circle cx="6" cy="7" r="5.200"/><path d="M10 11l5.500 5.500"/></svg>
        <svg viewBox="0 0 16 18"><circle cx="8" cy="9" r="7.500"/><path d="M5.800 7.500q0-2.500 2.200-2.500t2.200 2Q10.200 8.300 8 9.500v1.800M8 12.500v1.200"/></svg>
        <svg viewBox="0 0 16 18"><circle cx="2" cy="9" r="1.300"/><circle cx="8" cy="9" r="1.300"/><circle cx="14" cy="9" r="1.300"/></svg>
      </aside>
    </section>

    <footer class="status">
      <svg class="nav" width="14" height="13" viewBox="0 0 14 13"><path d="M.5.5h13v12H.5zM4.500 2.500v8" fill="none" stroke="#333"/></svg><span>Navigation</span>
      <svg class="pg1" width="38" height="12" viewBox="0 0 38 12" fill="none" stroke="#a2a2a2"><path d="M.5.5v11M8.500.5L3 6l5.500 5.500M37.500.5L33 6l4.500 5.500"/></svg>
      <span class="pageno">1/1</span>
      <svg class="pg2" width="42" height="12" viewBox="0 0 42 12" fill="none" stroke="#a2a2a2"><path d="M.5.5L5 6 .5 11.500M31.500.5L37 6l-5.500 5.500M39.500.5v11"/></svg>
      <svg class="pg3" width="47" height="14" viewBox="0 0 47 14" fill="none"><path d="M.5.5h13v13H.5zM3.500 7H11M6 4.500L3.500 7 6 9.500" stroke="#333"/><path d="M32.500.5h13v13h-13zM35 7h7.500M40 4.500L42.500 7 40 9.500" stroke="#a2a2a2"/></svg>
      <svg class="views" width="82" height="17" viewBox="0 0 82 17" fill="none" stroke="#30343e"><path d="M.5 1.500H7l1 1 1-1h6.500v13H9l-1 1-1-1H.5zM8 2.500v13"/><circle cx="40" cy="8.500" r="7.500"/><path d="M38 5v7l5-3.500zM66.500 6V2H70M66.500 11v4.500H70M79.500 11v4.500H76M74 7l5-5M79 6V2h-4M72 9.500L67 15"/></svg>
    </footer>
  </main>

  <aside class="behind-right">
    <div class="br-top"><svg width="8" height="12" viewBox="0 0 8 12"><path d="M-3 1l10 10M7 1l-10 10" stroke="#999"/></svg><b>?</b></div>
    <div class="br-tool"></div>
    <div class="br-box"></div>
    <div class="br-scroll"><svg width="8" height="5" viewBox="0 0 8 5"><path d="M.7 4.500L4 1.200l3.300 3.300" fill="none" stroke="#444" stroke-width="1.500"/></svg><i></i><svg class="dn" width="8" height="5" viewBox="0 0 8 5"><path d="M.7.7L4 4 7.300.7" fill="none" stroke="#444" stroke-width="1.500"/></svg></div>
    <svg class="pic" width="14" height="12" viewBox="0 0 14 12"><path d="M.5.5h13v11H.5z" fill="#fff" stroke="#999"/><path d="M2 2h10v4H2z" fill="#5aa5ee"/><path d="M2 6q5-2 10 2v2H2z" fill="#37705e"/></svg>
  </aside>
</div>

<div class="taskbar">
  <svg class="win" width="16" height="18" viewBox="0 0 16 18"><path d="M0 2.500L7 1.500v7H0zM8 1.300L16 0v8.500H8zM0 9.500h7v7l-7-1zM8 9.500h8V18l-8-1.200z" fill="#fff"/></svg>
  <div class="search"><svg width="17" height="18" viewBox="0 0 17 18"><circle cx="10.500" cy="6.500" r="5.500" fill="none" stroke="#222" stroke-width="1.300"/><path d="M6.500 10.500L.8 17" stroke="#222" stroke-width="1.400"/></svg><span>Type here to search</span></div>
  <svg class="tv" width="17" height="18" viewBox="0 0 17 18" fill="none" stroke="#fff"><path d="M.5 0v2.500h11V0M1 5.500h10v6H1zM.5 17v-2.500h11V17M15 0v3M15 8v9"/><path d="M14 5h2.500v3H14z" fill="#fff" stroke="none"/></svg>
  <div class="app-i act"><svg width="24" height="28" viewBox="0 0 24 28"><ellipse cx="12" cy="14" rx="12" ry="13.700" fill="url(#gWps)"/><path d="M4.500 11H8l1.500 6.500 3-6.500h1.500l.5 6.500L18.500 10M5 11l3 6.500h2M12 17.500h2.500M18.500 6.500v4M16.500 8.500h4" fill="none" stroke="#fff" stroke-width="1.700"/></svg></div>
  <div class="app-i"><svg width="24" height="28" viewBox="-12 -14 24 28"><g transform="scale(1 1.150)"><circle r="11.900" fill="#fbc116"/><path d="M0 0L-10.300-6A12 12 0 0 1 10.300-6z" fill="#e23a2e"/><path d="M-10.300-6A12 12 0 0 0 0 12L5.200 3 0 0z" fill="#2c9f4b"/><path d="M10.300-6H0V0L5.200 3 0 12A12 12 0 0 0 10.300-6z" fill="#fbc116"/><circle r="5.800" fill="#fff"/><circle r="4.500" fill="#3b7de8"/></g></svg></div>
  <div class="app-i"><svg width="22" height="22" viewBox="0 0 22 22"><path d="M0 1h9l2 2h11v17H0z" fill="#fccb5a"/><path d="M0 1h9v3H0z" fill="#d69a13"/><path d="M4 21v-9h14v9h-4v-4H8v4z" fill="#3796de"/></svg></div>
  <div class="app-i"><svg width="24" height="28" viewBox="0 0 24 28"><rect width="24" height="28" rx="2.500" fill="#7d5fd0"/><path d="M8 20.500V13M8 8.500H12q5 0 5 5T12 18.500H11" fill="none" stroke="#fff" stroke-width="3"/></svg></div>
  <div class="tray">
    <svg width="12" height="7" viewBox="0 0 12 7"><path d="M.5 6.500L6 1l5.500 5.500" fill="none" stroke="#fff" stroke-width="1.200"/></svg>
    <svg width="16" height="16" viewBox="0 0 16 16"><circle cx="8" cy="8" r="8" fill="#f7dd1c"/><path d="M2 3a8 8 0 0 1 8-2.700L7 3zM14 13a8 8 0 0 1-8 2.700L9 13z" fill="#1e8e2e"/><path d="M8 4v8M4 8h8" stroke="#1e8e2e" stroke-width="3"/></svg>
    <svg width="16" height="16" viewBox="0 0 16 16"><rect width="16" height="16" rx="2.500" fill="#fff"/><path d="M4.500 12a2.700 2.700 0 0 1 0-5.300 3.700 3.700 0 0 1 7 .5A2.400 2.400 0 0 1 12 12H7l3-3" fill="none" stroke="#cfcfcf" stroke-width="1.300"/></svg>
    <svg width="16" height="14" viewBox="0 0 16 14"><path d="M3 9.500a2.800 2.800 0 0 1 0-5.500 4.500 4.500 0 0 1 8-1 3.300 3.300 0 0 1 1 6.500z" fill="#a5a5a5"/><circle cx="11.500" cy="9.500" r="4.500" fill="#e02232"/><path d="M9.800 7.800l3.400 3.400M13.200 7.800l-3.400 3.400" stroke="#fff" stroke-width="1.200"/></svg>
    <svg width="17" height="16" viewBox="0 0 17 16" fill="none" stroke="#fff"><circle cx="8" cy="7.700" r="7"/><ellipse cx="8" cy="7.700" rx="3.300" ry="7"/><path d="M1.500 5h13M1.500 10.500h8"/><circle cx="13" cy="12" r="3" fill="#222"/><path d="M11 14l4-4"/></svg>
    <span class="eng">ENG</span>
    <div class="clock"><span>11:52</span><span>14-10-2023</span></div>
    <svg class="note" width="26" height="26" viewBox="0 0 26 26"><path d="M1 1h16v13H7l-3 3v-3H1z" fill="#fff"/><path d="M3.500 4.500h11M3.500 7.500h11M3.500 10.500h7" stroke="#222"/><circle cx="16.500" cy="16.500" r="7.700" fill="#2c2b2a" stroke="#8c8c8c"/><text x="13.500" y="20.500">3</text></svg>
    <i class="peek"></i>
  </div>
</div>
</body>
</html>
```
FILE: styles.css
```css
*{box-sizing:border-box}
body{margin:0;width:1366px;height:768px;overflow:hidden;font-family:"Noto Sans","Open Sans",sans-serif;font-size:12px;color:#222;background:#fff}
svg{flex:none;display:block}
i{display:block;flex:none}
.defs{position:absolute}
.desktop{display:flex;height:728px}

.behind-left{width:13px;background:#fff;overflow:hidden;flex:none;display:flex;flex-direction:column}
.behind-left>*{flex:none}
.bl-red{height:23px;margin-top:3px;background:#94201f}
.bl-tool{height:93px;background:#f4f5f8;border-bottom:1px solid #d5d5d5;padding:41px 0 0 7px;font-size:9px;line-height:18px;color:#a08a70}
.bl-gap{height:106px}
.bl-thumb{height:24px;background:#d2d2d2}

.app{width:1326px;flex:none;background:#ededed;display:flex;flex-direction:column;box-shadow:0 0 7px rgba(0,0,0,.5);z-index:1}
.tabs{height:40px;display:flex;align-items:flex-start;padding:6px 0 0 4px;gap:4px}
.tab{height:30px;width:200px;border-radius:7px;background:#e0e0e0;display:flex;align-items:center;padding-left:6px;letter-spacing:-.3px}
.tab.home{width:117px;padding-left:31px;gap:6px}
.tab.on{background:#fff;box-shadow:0 0 3px rgba(0,0,0,.25)}
.nm{margin-left:6px;white-space:nowrap;width:131px;flex:none}
.tight{letter-spacing:-.4px}
.mon{margin-top:-1px}
.dot{width:6px;height:6px;border-radius:3px;background:#b5b5b5;margin-left:12px}
.x{margin-left:11px}
.plus{margin:9px 0 0 18px}
.winctl{margin-left:auto;display:flex;align-items:center;margin-top:2px;height:24px;padding-right:15px}
.cnt{font-size:10px;fill:#46597c;font-family:"Noto Sans",sans-serif}
.avatar{width:20px;height:20px;border-radius:10px;background:#7a86cc;color:#dfe3fa;font-size:8px;line-height:20px;text-align:center;margin-left:12px}
.upgrade{width:121px;height:24px;border-radius:12px;background:linear-gradient(90deg,#46bbff,#2467fa 55%,#8c4dfa);color:#fff;display:flex;align-items:center;padding-left:16px;gap:6px;margin:0 29px 0 22px}
.upgrade b{font-weight:400;font-size:12px;letter-spacing:-.3px;white-space:nowrap}
.wc{margin-left:30px}
.wc.min{margin-left:0}

.menu{height:35px;display:flex;align-items:center;padding:0 18px 5px 19px}
.mtext{margin-left:7px;width:43px;letter-spacing:-.2px}
.vr{width:1px;height:18px;background:#cfcfcf}
.q1{margin-left:13px}
.q2{margin-left:3px}
.v2{margin-left:14px}
.mtabs{display:flex;gap:34px;font-size:12px;margin-left:132px;height:30px;line-height:33px;white-space:nowrap}
.mtabs span{position:relative}
.cur{color:#c8254e;font-weight:700}
.cur:after{content:"";position:absolute;left:1px;right:1px;bottom:1px;height:2px;background:#c8254e}
.mtabs .fs{letter-spacing:.25px;width:58px;margin:0 2px 0 1px}
.fs:after{content:"";position:absolute;right:-10px;top:3px;width:6px;height:6px;border-radius:3px;background:#f0625e}
.ai{margin-left:auto}
.wpsai{margin-left:5px;color:#d05bc0;white-space:nowrap;width:39px;letter-spacing:-.2px;background:linear-gradient(90deg,#e0609c,#c060e0);-webkit-background-clip:text;-webkit-text-fill-color:transparent}
.share{margin-left:21px;width:45px;height:24px;border:1px solid #1b6cf5;border-radius:4px;background:#fff;color:#1b6cf5;text-align:center;line-height:22px;letter-spacing:-.3px}
.v3{margin-left:15px}
.gear{margin-left:20px}
.dots{margin-left:22px}
.up{margin-left:24px}

.ribbon{height:74px;margin:0 13px;background:#fff;border-radius:8px;box-shadow:0 0 3px rgba(0,0,0,.4);display:flex;align-items:flex-start;position:relative;z-index:1;letter-spacing:-.36px}
.it{display:flex;flex-direction:column;align-items:center;padding-top:10px;flex:none}
.it>svg{width:32px;height:28px}
.it>span{display:flex;align-items:center;gap:3px;white-space:nowrap;height:24px;line-height:24px}
.cv{width:6px;height:4px;margin-top:2px}
.sep{width:1px;height:65px;background:#d2d2d2;margin:4px 0 0 13px}
.i1{width:54px;margin-left:39px}.i2{width:46px;margin-left:15px}.i3{width:62px;margin-left:15px}
.i4{width:76px;margin-left:13px}.i5{width:71px;margin-left:18px}.s2b{margin-left:12px}
.i6{width:59px;margin-left:13px}.i7{width:76px;margin-left:17px}.i8{width:43px;margin-left:16px}.s3b{margin-left:14px}
.i9{width:32px;margin-left:13px}.i10{width:24px;margin-left:23px}.i11{width:60px;margin-left:21px}.i12{width:66px;margin-left:18px}
.i13{width:90px;margin-left:13px}.i14{width:67px;margin-left:12px}.i15{width:119px;margin-left:13px}

.work{height:555px;display:flex;flex:none}
.rail{width:57px;flex:none;display:flex;flex-direction:column;align-items:center}
.rail svg{width:16px;height:18px;fill:none;stroke:#3a3a3a;stroke-width:1.1;margin-bottom:22px}
.rail .nv{stroke:#39445c}
.rail .aig{stroke:url(#gAi)}
.left{border-right:1px solid #d0d0d0;padding-top:24px}
.right{border-left:1px solid #d0d0d0;padding-top:16px}
.right svg:nth-child(2){margin-top:-8px}
.right .near{margin-top:-4px}
.canvas{flex:1;padding:37px 0 0 7px}
.page{width:1202px;height:481px;background:#fafafa;border:1px solid #dcdcdc;display:flex;justify-content:space-between}
.board{display:flex;height:341px;width:1057px;background:#fff}
.darkbox{align-self:flex-end;width:107px;height:57px;background:#2f2f2f;border:1px solid #aaa;flex:none}

.panel text{font-family:"Liberation Sans",Arial,sans-serif;font-weight:700}
.ln{fill:none;stroke:#b0b0b0}
.foot{fill:#2f2f2f}
.ttl{font-size:7.2px;stroke:#222;stroke-width:.15px}
.h{font-size:4px;stroke:#111;stroke-width:.15px}
.b5,.b4,.b3,.b25,.b2{stroke:#000;stroke-width:.3px;fill:#000}
.b5{font-size:5.2px;stroke-width:.15px}
.b4{font-size:3.9px}.b3{font-size:3px}.b25{font-size:2.5px}.b2{font-size:2.1px;stroke-width:.15px}
.lt{opacity:.75}
.m{text-anchor:middle}
.w,.w2,.w3{fill:#fff}
.tpl{font-size:4.2px}
.w3{font-size:2.8px;stroke:#fff;stroke-width:.2px}.w2{font-size:2.1px;stroke:#fff;stroke-width:.1px}
.tm,.bt{font-size:2.6px;fill:#1f7f9f;stroke:#1f7f9f;stroke-width:.15px}
.bt{fill:#1b5f80}
.big{font-size:3.2px;fill:#1ba7d8;stroke:#1ba7d8}
.gy{font-size:3.4px;fill:#555;stroke:#555}
.blk{font-size:2.7px;stroke:#000;stroke-width:.9px}
.pm{font-size:5px;fill:#999}
.hr{stroke:#dedede;stroke-width:.8;fill:none}
.num{fill:#1f86a6}
.bx{fill:#3bb0db}.bw{stroke:#fff;stroke-width:1}
.gb{fill:#fff;stroke:#b5b5b5}
.ic,.ic2{fill:none;stroke:#8fcde6;stroke-width:.7}
.wave{stroke:#a5d9ee;stroke-width:.9;stroke-dasharray:2 .5;fill:none}
.tip{fill:#fdf0db}
.y2{fill:#fcf080}
.yl{fill:#fbfb8e}
.yd{stroke:#fbf55e;stroke-width:2;fill:none;stroke-dasharray:2.2 .3}
.kd{stroke:#666;stroke-width:.7;fill:none}
.card{fill:#fff;filter:drop-shadow(1px 1px 0 #000)}
.ar{stroke:#999;stroke-width:.8;fill:none}

.status{height:24px;border-top:1px solid #cfcfcf;display:flex;align-items:center;padding-left:19px;flex:none}
.status>span:not(.pageno){margin-left:5px;width:60px;white-space:nowrap;letter-spacing:-.3px}
.pg1{margin-left:20px}
.pageno{margin-left:18px;width:110px;height:20px;border:1px solid #b5b5b5;border-radius:4px;background:#fff;text-align:center;line-height:18px;letter-spacing:-.3px}
.pg2{margin-left:17px}.pg3{margin-left:18px}
.views{margin-left:auto;margin-right:14px}

.behind-right{flex:1;background:#fff;display:flex;flex-direction:column}
.br-top{height:47px;border-bottom:1px solid #d8d8d8;flex:none}
.br-top svg{margin-top:4px;height:12px}
.br-top b{display:block;width:16px;height:16px;border-radius:8px;background:#0b6bc0;color:#fff;font-size:12px;line-height:16px;text-align:center;margin:10px 0 0 8px}
.br-tool{height:92px;background:#f4f5f8;border-bottom:1px solid #d5d5d5;flex:none}
.br-box{width:15px;height:30px;margin-top:5px;border:1px solid #d0d0d0;flex:none}
.br-scroll{margin:7px 0 0 11px;width:15px;height:524px;background:#f0f0f0;display:flex;flex-direction:column;align-items:center;padding-top:6px;flex:none}
.br-scroll i{width:15px;height:17px;background:#cdcdcd;margin-top:6px}
.dn{margin:auto 0 6px}
.pic{margin:5px 0 0 5px}

.taskbar{height:40px;background:linear-gradient(90deg,#22211f 0,#2b2823 30%,#2d2620 41%,#301a19 45%,#2c2120 60%,#2b2220 76%,#301d1c 80%,#24201d 88%,#1e1e1b 100%);display:flex;align-items:center;color:#fff}
.win{margin-left:16px}
.search{margin-left:16px;width:288px;height:40px;background:#fff;border:2px solid #b4b4b4;border-bottom-width:1px;display:flex;align-items:center;color:#333;font-size:14px;padding-left:10px;gap:11px;white-space:nowrap;flex:none}
.tv{margin-left:15px}
.app-i{width:40px;height:40px;border-bottom:2px solid #f3aaa8;display:flex;align-items:center;justify-content:center;padding-top:2px;margin-left:9px;flex:none}
.app-i.act{width:48px;margin-left:19px;background:linear-gradient(90deg,#5b5752 43px,#3d3a37 43px,#4d4945 45px);margin-right:-4px}
.tray{margin-left:auto;display:flex;align-items:center;white-space:nowrap}
.tray svg{margin-right:8px}
.tray svg:nth-child(1){margin-right:10px}
.eng{width:24px;margin-left:1px;font-size:12px;letter-spacing:-.3px}
.clock{width:58px;margin-left:12px;display:flex;flex-direction:column;align-items:center;line-height:18px;letter-spacing:-.4px}
.tray .note{margin:0 11px 0 17px}
.note text{font-size:11px;fill:#fff}
.peek{width:1px;height:40px;background:#777;margin-right:4px}
```
